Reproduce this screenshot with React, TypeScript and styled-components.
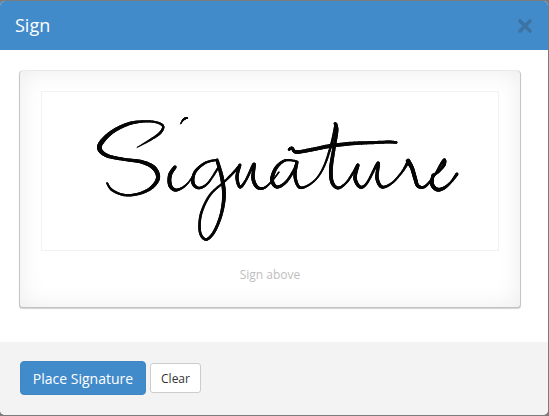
import * as React from 'react'
import styled, { createGlobalStyle } from 'styled-components'

const GlobalStyle = createGlobalStyle`
	html, body {
		margin: 0;
		padding: 0;
		background: #7b7b7b;
	}
	body {
		font-family: "Open Sans", "Liberation Sans", sans-serif;
	}
`

const Backdrop = styled.div`
	box-sizing: border-box;
	width: 549px;
	height: 416px;
	padding: 1px 1px 1px 0;
	background: #7b7b7b;
`

const Modal = styled.div`
	display: flex;
	flex-direction: column;
	height: 100%;
	overflow: hidden;
	background: white;
	border-radius: 5px;
`

const Header = styled.div`
	display: flex;
	align-items: center;
	justify-content: space-between;
	flex: 0 0 49px;
	padding: 0 15px;

	background: #428bca;
`

const Title = styled.h4`
	margin: 0;

	color: white;
	font-size: 18px;
	font-weight: 400;
	line-height: 49px;
`

const Close = styled.svg`
	display: block;
	width: 16px;
	height: 16px;
`

const Body = styled.div`
	flex: 1;
	padding: 21px 28px 35px 20px;
`

const Panel = styled.div`
	box-sizing: border-box;
	display: flex;
	flex-direction: column;
	align-items: center;
	height: 236px;
	padding: 20px 21px 0;

	border-radius: 3px;
	background: white;
	box-shadow:
		inset 0 0 24px rgba(0, 0, 0, 0.08),
		0 0 0 1px rgba(0, 0, 0, 0.07),
		0 1px 1px 0.5px rgba(0, 0, 0, 0.18);
`

const SignatureArea = styled.div`
	box-sizing: border-box;
	width: 100%;
	height: 160px;

	background: white;
	border: 1px solid #f2f2f2;
`

const SignatureDrawing = styled.svg`
	display: block;
	margin: -1px;
	width: 458px;
	height: 160px;
`

const Hint = styled.div`
	margin-top: 15px;

	color: #bebebe;
	font-size: 12px;
	line-height: 18px;
`

const Footer = styled.div`
	display: flex;
	align-items: center;
	gap: 4px;
	flex: 0 0 73px;
	box-sizing: border-box;
	padding: 0 20px 1px;

	background: #f3f3f3;
`

const Button = styled.button<{ $primary?: boolean }>`
	box-sizing: border-box;
	height: ${props => (props.$primary ? '34px' : '30px')};
	width: ${props => (props.$primary ? '126px' : '51px')};
	padding: 0;

	color: ${props => (props.$primary ? 'white' : '#333')};
	background: ${props => (props.$primary ? '#428bca' : 'white')};
	border: 1px solid ${props => (props.$primary ? '#3f86c3' : '#ccc')};
	border-radius: ${props => (props.$primary ? '4px' : '3px')};
	font-family: inherit;
	font-size: ${props => (props.$primary ? '14px' : '12px')};
`

type Point = [number, number, number]

const INK_SCALE = 1.3

// catmull-rom through the points, width eased between them
const sampleStroke = (points: Point[]) => {
	const out: Point[] = []
	for (let i = 0; i < points.length - 1; i++) {
		const p0 = points[Math.max(i - 1, 0)]
		const p1 = points[i]
		const p2 = points[i + 1]
		const p3 = points[Math.min(i + 2, points.length - 1)]
		for (let s = 0; s < 10; s++) {
			const t = s / 10
			const at = (k: number) =>
				0.5 *
				(2 * p1[k] +
					(p2[k] - p0[k]) * t +
					(2 * p0[k] - 5 * p1[k] + 4 * p2[k] - p3[k]) * t * t +
					(3 * p1[k] - p0[k] - 3 * p2[k] + p3[k]) * t * t * t)
			out.push([at(0), at(1), p1[2] + (p2[2] - p1[2]) * t])
		}
	}
	out.push(points[points.length - 1])
	return out
}

const strokes: Point[][] = [
	// S
	[
		[137, 147.5, 0.6], [150, 140, 1.6], [160, 133, 2], [163, 126, 1.8], [155, 122, 1.6],
		[142, 121.5, 1.8], [128, 124, 2.6], [112, 132, 3], [101, 143, 3.6], [100, 150, 3.4],
		[108, 156, 2.8], [125, 159.5, 2.4], [142, 162, 2.8], [154, 168, 3.4], [158, 178, 3.2],
		[151, 188, 2.6], [138, 194, 2], [124, 195, 1.8], [112, 190, 1.8], [107, 183, 1.4],
	],
	// i dot
	[[180.5, 124, 0.6], [183, 120, 1.4], [186, 118, 1.6], [187.5, 118, 1]],
	// i, tail runs into the g bowl
	[
		[175, 167, 2.6], [170, 175, 3], [170, 185, 3], [175, 190, 2.4], [182, 188, 1.6], [188, 183, 1.2],
		[193, 176, 1.2],
	],
	[
		[216, 160, 1.6], [205, 163, 1.8], [195, 172, 2.2], [193, 183, 2.6], [199, 188, 2], [208, 183, 1.6],
		[218, 168, 1.6],
	],
	// g descender, up into u
	[
		[217, 160, 2.4], [222, 178, 3], [224, 196, 3], [221, 215, 2.4], [214, 232, 2.2], [206, 239.5, 2],
		[200, 232, 2], [201, 214, 2], [210, 195, 1.8], [224, 182, 1.6], [234, 172, 1.8], [240, 165, 2],
	],
	[
		[240, 165, 2.2], [237, 177, 2.6], [240, 187, 2.2], [246, 180, 1.8], [254, 164, 2.2], [253, 178, 2.8],
		[257, 187, 2.6], [264, 188, 1.8], [272, 181, 1.2], [279, 172, 1.2],
	],
	// a
	[
		[296, 161, 1.4], [285, 160.5, 1.8], [276, 168, 2.6], [272, 180, 3], [277, 187, 2.4], [286, 182, 2],
		[294, 170, 2], [297, 162, 2],
	],
	[
		[297, 162, 2.4], [295, 176, 2.6], [299, 187, 2.2], [307, 186, 1.6], [317, 178, 1.4], [325, 164, 1.6],
		[332, 142, 2], [336, 124, 2.4],
	],
	// t stem, into u r e
	[
		[335, 123.5, 2.2], [337, 130, 2.2], [334, 148, 2.6], [331, 168, 3], [332, 182, 2.8], [338, 188, 2.2],
		[346, 183, 1.6], [353, 173, 1.8], [358, 165, 2.2], [355, 178, 2.8], [360, 187, 2.4], [367, 183, 1.8],
		[378, 163, 2.2], [377, 178, 2.8], [382, 187, 2.4], [392, 183, 1.6], [402, 172, 1.6], [408, 162, 2.4],
	],
	[
		[408, 161, 3.6], [412, 168, 3], [415, 178, 3], [418, 186, 2.6], [425, 186.5, 2], [434, 176, 1.6],
		[441, 164, 1.8], [444.5, 160, 2.2], [444, 165, 2.4], [438, 172, 2], [433, 175, 1.6],
	],
	[
		[433, 175, 2.2], [432, 184, 3], [437, 189.5, 3], [444, 188, 2.4], [451, 182, 1.6], [457, 174, 2.4],
	],
	// t bar
	[
		[289, 149.5, 2], [292, 148, 2], [296, 152, 2.6], [310, 150, 2.8], [330, 146, 3], [352, 143.5, 2.8],
		[375, 142.5, 2.4], [390, 142, 2.2], [396.5, 142.5, 1.8],
	],
]

const Signature = () => (
	<SignatureDrawing viewBox="41 91 458 160">
		<g stroke="#060606" fill="none" strokeLinecap="round">
			{strokes.map((points, i) => {
				const sampled = sampleStroke(points)
				return sampled.slice(1).map((p, j) => (
					<line
						key={`${i}-${j}`}
						x1={sampled[j][0]}
						y1={sampled[j][1]}
						x2={p[0]}
						y2={p[1]}
						strokeWidth={p[2] * INK_SCALE}
					/>
				))
			})}
		</g>
	</SignatureDrawing>
)

export default function App() {
	return (
		<>
			<GlobalStyle />
			<Backdrop>
				<Modal>
					<Header>
						<Title>Sign</Title>
						<Close viewBox="0 0 16 16">
							<path
								d="M3 3 L13 13 M13 3 L3 13"
								stroke="#3c73a3"
								strokeWidth="3.6"
								strokeLinecap="round"
							/>
						</Close>
					</Header>
					<Body>
						<Panel>
							<SignatureArea>
								<Signature />
							</SignatureArea>
							<Hint>Sign above</Hint>
						</Panel>
					</Body>
					<Footer>
						<Button $primary>Place Signature</Button>
						<Button>Clear</Button>
					</Footer>
				</Modal>
			</Backdrop>
		</>
	)
}
